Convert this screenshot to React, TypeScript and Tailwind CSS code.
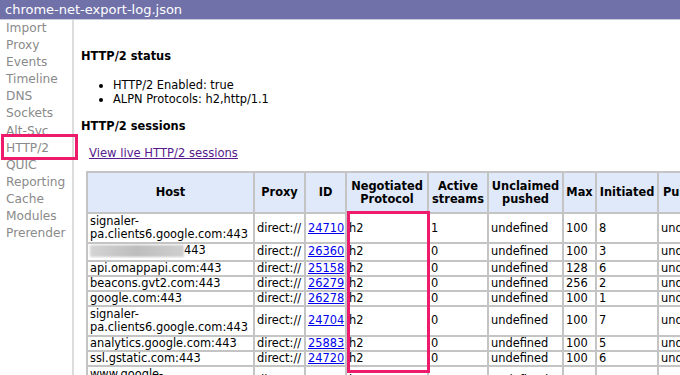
import React from "react";

const rows: {
  host: React.ReactNode;
  two?: boolean;
  id: string;
  act: string;
  max: string;
  init: string;
}[] = [
  { host: <>signaler-<br />pa.clients6.google.com:443</>, two: true, id: "24710", act: "1", max: "100", init: "8" },
  {
    host: (
      <span className="inline-flex items-center">
        <span className="inline-block w-[94px] h-[12px] bg-gradient-to-r from-[#d4d4d4] via-[#bdbdbd] to-[#cfcfcf] blur-[1px]" />
        <span>443</span>
      </span>
    ),
    id: "26360", act: "0", max: "100", init: "3",
  },
  { host: "api.omappapi.com:443", id: "25158", act: "0", max: "128", init: "6" },
  { host: "beacons.gvt2.com:443", id: "26279", act: "0", max: "256", init: "2" },
  { host: "google.com:443", id: "26278", act: "0", max: "100", init: "1" },
  { host: <>signaler-<br />pa.clients6.google.com:443</>, two: true, id: "24704", act: "0", max: "100", init: "7" },
  { host: "analytics.google.com:443", id: "25883", act: "0", max: "100", init: "5" },
  { host: "ssl.gstatic.com:443", id: "24720", act: "0", max: "100", init: "6" },
  { host: <>www.google-<br />analytics.com:443</>, two: true, id: "26128", act: "0", max: "100", init: "1" },
];

const side = ["Import", "Proxy", "Events", "Timeline", "DNS", "Sockets", "Alt-Svc", "HTTP/2", "QUIC", "Reporting", "Cache", "Modules", "Prerender"];

const td = "border-2 border-[#c4c4c4] px-[2px] py-0 align-middle whitespace-nowrap overflow-hidden";
const th = "border-2 border-[#c4c4c4] px-[2px] py-0 font-bold text-center align-middle bg-[#dfe9f9] whitespace-nowrap";

export default function App() {
  return (
    <div className="relative w-[680px] h-[375px] overflow-hidden bg-white text-black" style={{ fontFamily: "'DejaVu Sans', sans-serif" }}>
      <div className="h-[20px] bg-[#7171a9] border-b border-[#c9c9dc] text-white text-[13px] leading-[19px] pl-[5px]">
        chrome-net-export-log.json
      </div>
      <div className="flex h-[355px]">
        <div className="w-[74px] shrink-0 border-r-2 border-[#dcdcdc] pl-[6px]">
          {side.map((s) => (
            <div key={s} className="text-[12.2px] leading-[17.1px] text-[#8a8a8a]">{s}</div>
          ))}
        </div>
        <div className="flex-1 overflow-hidden pl-[7px] text-[11.4px] leading-[13px]">
          <div className="mt-[29px] font-bold text-[11.4px] leading-[15px]">HTTP/2 status</div>
          <ul className="mt-[15px] ml-[20px] list-disc pl-[12px]">
            <li className="leading-[13.5px]">HTTP/2 Enabled: true</li>
            <li className="leading-[13.5px]">ALPN Protocols: h2,http/1.1</li>
          </ul>
          <div className="mt-[13px] font-bold text-[11.4px] leading-[15px]">HTTP/2 sessions</div>
          <div className="mt-[13px] ml-[8px]">
            <a className="text-[#551a8b] underline text-[11.6px]">View live HTTP/2 sessions</a>
          </div>
          <table className="mt-[11px] ml-[5px] border-collapse table-fixed w-[622px] border-2 border-[#c4c4c4]">
            <colgroup>
              <col className="w-[167px]" />
              <col className="w-[51px]" />
              <col className="w-[41px]" />
              <col className="w-[82px]" />
              <col className="w-[60px]" />
              <col className="w-[75px]" />
              <col className="w-[33px]" />
              <col className="w-[62px]" />
              <col className="w-[60px]" />
            </colgroup>
            <thead>
              <tr className="h-[41px]">
                <th className={th}>Host</th>
                <th className={th}>Proxy</th>
                <th className={th}>ID</th>
                <th className={th}>Negotiated<br />Protocol</th>
                <th className={th}>Active<br />streams</th>
                <th className={th}>Unclaimed<br />pushed</th>
                <th className={th}>Max</th>
                <th className={th}>Initiated</th>
                <th className={th + " text-left pl-[4px]"}>Pushed</th>
              </tr>
            </thead>
            <tbody>
              {rows.map((r, i) => (
                <tr key={i} className={r.two ? "h-[30px]" : "h-[15px]"}>
                  <td className={td}>{r.host}</td>
                  <td className={td}>direct://</td>
                  <td className={td}><a className="text-[#0000ee] underline">{r.id}</a></td>
                  <td className={td}>h2</td>
                  <td className={td}>{r.act}</td>
                  <td className={td}>undefined</td>
                  <td className={td}>{r.max}</td>
                  <td className={td}>{r.init}</td>
                  <td className={td}>undefined</td>
                </tr>
              ))}
            </tbody>
          </table>
        </div>
      </div>
      <div className="absolute left-[1px] top-[134px] w-[77px] h-[26px] border-[3px] border-[#ee1a6c]" />
      <div className="absolute left-[347px] top-[211px] w-[83px] h-[162px] border-[3px] border-[#ee1a6c]" />
    </div>
  );
}
